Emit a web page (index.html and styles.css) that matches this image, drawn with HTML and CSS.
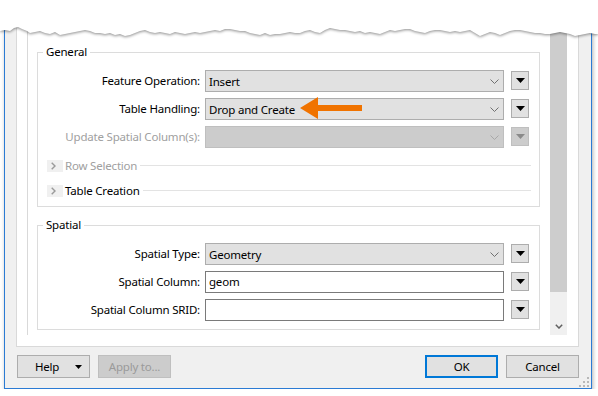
FILE: index.html
```html
<!DOCTYPE html>
<html lang="en">
<head>
  <meta charset="UTF-8" />
  <title>Writer Parameters</title>
  <link rel="stylesheet" href="styles.css">
</head>
<body>
  <div class="dialog">
    <div class="panel">
      <div class="viewport">
        <div class="content">

          <div class="group">
            <div class="group-title">General</div>
            <div class="rows">
              <span class="field-label">Feature Operation:</span>
              <div class="combo">
                <span>Insert</span>
                <svg class="chev" width="9" height="5" viewBox="0 0 9 5"><polyline points="0.5,0.5 4.5,4.5 8.5,0.5" /></svg>
              </div>
              <button class="drop"><svg width="9" height="5" viewBox="0 0 9 5"><polygon points="0,0 9,0 4.5,5" /></svg></button>

              <span class="field-label">Table Handling:</span>
              <div class="combo">
                <span>Drop and Create</span>
                <svg class="chev" width="9" height="5" viewBox="0 0 9 5"><polyline points="0.5,0.5 4.5,4.5 8.5,0.5" /></svg>
                <!-- callout arrow -->
                <svg class="callout" width="62" height="23" viewBox="0 0 62 23"><path d="M0,11 L18,0 L18,8 L62,8 L62,14 L18,14 L18,22 Z" /></svg>
              </div>
              <button class="drop"><svg width="9" height="5" viewBox="0 0 9 5"><polygon points="0,0 9,0 4.5,5" /></svg></button>

              <span class="field-label disabled">Update Spatial Column(s):</span>
              <div class="combo disabled">
                <span></span>
                <svg class="chev" width="9" height="5" viewBox="0 0 9 5"><polyline points="0.5,0.5 4.5,4.5 8.5,0.5" /></svg>
              </div>
              <button class="drop disabled"><svg width="9" height="5" viewBox="0 0 9 5"><polygon points="0,0 9,0 4.5,5" /></svg></button>
            </div>

            <div class="sections">
              <div class="expander disabled">
                <span class="exp-icon"><svg width="5" height="8" viewBox="0 0 5 8"><polyline points="0.7,0.7 4,4 0.7,7.3" /></svg></span>
                <span>Row Selection</span>
              </div>
              <div class="expander">
                <span class="exp-icon"><svg width="5" height="8" viewBox="0 0 5 8"><polyline points="0.7,0.7 4,4 0.7,7.3" /></svg></span>
                <span>Table Creation</span>
              </div>
            </div>
          </div>

          <div class="group spatial">
            <div class="group-title">Spatial</div>
            <div class="rows">
              <span class="field-label">Spatial Type:</span>
              <div class="combo">
                <span>Geometry</span>
                <svg class="chev" width="9" height="5" viewBox="0 0 9 5"><polyline points="0.5,0.5 4.5,4.5 8.5,0.5" /></svg>
              </div>
              <button class="drop"><svg width="9" height="5" viewBox="0 0 9 5"><polygon points="0,0 9,0 4.5,5" /></svg></button>

              <span class="field-label">Spatial Column:</span>
              <div class="text-input">geom</div>
              <button class="drop"><svg width="9" height="5" viewBox="0 0 9 5"><polygon points="0,0 9,0 4.5,5" /></svg></button>

              <span class="field-label">Spatial Column SRID:</span>
              <div class="text-input"></div>
              <button class="drop"><svg width="9" height="5" viewBox="0 0 9 5"><polygon points="0,0 9,0 4.5,5" /></svg></button>
            </div>
          </div>

        </div>
        <div class="scrollbar">
          <div class="thumb"></div>
          <div class="sb-arrow"><svg width="8" height="5" viewBox="0 0 8 5"><polyline points="0.8,0.8 4,4 7.2,0.8" /></svg></div>
        </div>
      </div>
    </div>

    <div class="actions">
      <button class="btn help"><span>Help</span><svg width="7" height="4" viewBox="0 0 7 4"><polygon points="0,0 7,0 3.5,4" /></svg></button>
      <button class="btn" disabled>Apply to...</button>
      <span class="spacer"></span>
      <button class="btn default">OK</button>
      <button class="btn">Cancel</button>
    </div>

    <svg class="grip" width="10" height="10" viewBox="0 0 10 10">
      <rect x="8" y="0" width="2" height="2" /><rect x="8" y="4" width="2" height="2" /><rect x="4" y="4" width="2" height="2" />
      <rect x="8" y="8" width="2" height="2" /><rect x="4" y="8" width="2" height="2" /><rect x="0" y="8" width="2" height="2" />
    </svg>
  </div>

  <!-- torn top edge of the screenshot -->
  <svg class="torn" width="598" height="44" viewBox="0 0 598 44">
    <path d="M0,0 L598,0 L598,34 L595,34 L590,33 L585,34 L580,35 L575,36 L570,34 L565,33 L560,32 L555,33 L550,34 L545,34 L540,33 L535,33 L530,32 L525,31 L520,30 L515,30 L510,31 L505,33 L500,35 L495,33 L490,32 L485,34 L480,36 L475,33 L470,30 L465,31 L460,32 L455,31 L450,32 L445,31 L440,30 L435,30 L430,31 L425,33 L420,32 L415,31 L410,29 L405,29 L400,30 L395,31 L390,30 L385,32 L380,34 L375,33 L370,32 L365,33 L360,31 L355,32 L350,31 L345,30 L340,30 L335,29 L330,28 L325,30 L320,33 L315,32 L310,30 L305,31 L300,33 L295,33 L290,32 L285,33 L280,34 L275,34 L270,35 L265,33 L260,35 L255,34 L250,33 L245,31 L240,31 L235,30 L230,29 L225,29 L220,31 L215,30 L210,31 L205,32 L200,33 L195,32 L190,33 L185,34 L180,33 L175,32 L170,34 L165,33 L160,32 L155,33 L150,32 L145,30 L140,31 L135,33 L130,35 L125,36 L120,34 L115,35 L110,33 L105,34 L100,33 L95,33 L90,31 L85,30 L80,31 L75,32 L70,33 L65,34 L60,35 L55,32 L50,34 L45,33 L40,31 L35,32 L30,33 L27,31 L22,29 L18,27 L14,28 L10,31 L5,30 L0,31 Z" />
  </svg>
</body>
</html>
```

FILE: styles.css
```css
* {
  box-sizing: border-box;
}
body {
  margin: 0;
  background: #fff;
  font-family: "Noto Sans", "Open Sans", sans-serif;
  font-size: 11.5px;
  letter-spacing: -0.2px;
  color: #000;
  overflow: hidden;
}
button {
  font: inherit;
  letter-spacing: inherit;
  color: inherit;
  margin: 0;
}
.dialog {
  position: relative;
  margin-left: 4px;
  width: 588px;
  height: 389px;
  background: #f0f0f0;
  border: 1px solid #2b7bd4;
  border-top: none;
  padding: 11px 12px 10px 11px;
  display: flex;
  flex-direction: column;
  gap: 8px;
  box-shadow: 1px 2px 4px rgb(0 0 0 / 0.3);
}
.panel {
  flex: 1;
  display: flex;
  background: #fff;
  border: 1px solid #d9d9d9;
  padding: 10px 11px 11px 10px;
}
.viewport {
  flex: 1;
  display: flex;
  border-left: 1px solid #d9d9d9;
}
.content {
  flex: 1;
  padding: 30px 10px 0 9px;
  overflow: hidden;
}
.scrollbar {
  width: 17px;
  background: #f0f0f0;
  display: flex;
  flex-direction: column;
}
.thumb {
  height: 270px;
  background: #cdcdcd;
}
.sb-arrow {
  margin-top: auto;
  height: 17px;
  display: flex;
  align-items: center;
  justify-content: center;
}
.sb-arrow svg {
  fill: none;
  stroke: #606060;
  stroke-width: 1.5;
}

/* group boxes */
.group {
  border: 1px solid #dcdcdc;
  padding-bottom: 3px;
}
.group.spatial {
  margin-top: 18px;
  padding-bottom: 8px;
}
.group-title {
  display: table;
  margin: -9px 0 0 5px;
  padding: 0 3px;
  line-height: 16px;
  background: #fff;
}
.rows {
  margin: 10px 10px 0 0;
  display: grid;
  grid-template-columns: 1fr 299px 18px;
  grid-auto-rows: 22px;
  column-gap: 7px;
  row-gap: 6px;
}
.field-label {
  text-align: right;
  white-space: nowrap;
  line-height: 22px;
  margin-right: -2px;
}
.field-label.disabled {
  color: #a0a0a0;
}
.combo {
  position: relative;
  display: flex;
  align-items: center;
  justify-content: space-between;
  border: 1px solid #adadad;
  background: #e1e1e1;
  padding: 0 4px 0 3px;
  white-space: nowrap;
}
.combo .chev {
  fill: none;
  stroke: #707070;
  stroke-width: 1;
}
.combo.disabled {
  background: #cccccc;
  border-color: #bfbfbf;
}
.combo.disabled .chev {
  stroke: #a8a8a8;
}
.callout {
  position: absolute;
  left: 94px;
  top: -2px;
  fill: #f07300;
}
.text-input {
  border: 1px solid #7a7a7a;
  background: #fff;
  padding: 0 3px;
  line-height: 20px;
}
.drop {
  align-self: start;
  margin-top: 1px;
  width: 18px;
  height: 19px;
  padding: 0;
  border: 1px solid #adadad;
  background: #e1e1e1;
  display: flex;
  align-items: center;
  justify-content: center;
}
.drop svg {
  fill: #000;
}
.drop.disabled {
  background: #cccccc;
  border-color: #bfbfbf;
}
.drop.disabled svg {
  fill: #8a8a8a;
}

/* collapsible sections */
.sections {
  margin-top: 5px;
}
.expander {
  display: flex;
  align-items: center;
  height: 25px;
  margin-left: 9px;
  padding-right: 8px;
  white-space: nowrap;
}
.expander::after {
  content: "";
  flex: 1;
  height: 1px;
  margin-left: 3px;
  background: #e3e3e3;
}
.expander.disabled {
  color: #a0a0a0;
}
.exp-icon {
  width: 16px;
  height: 12px;
  margin-right: 2px;
  background: #f0f0f0;
  display: flex;
  align-items: center;
  padding-left: 4px;
}
.exp-icon svg {
  fill: none;
  stroke: #9a9a9a;
  stroke-width: 1.4;
}

/* bottom buttons */
.actions {
  height: 23px;
  display: flex;
  gap: 8px;
  padding-left: 1px;
}
.spacer {
  flex: 1;
}
.btn {
  width: 73px;
  height: 23px;
  padding: 0;
  border: 1px solid #adadad;
  background: #e1e1e1;
}
.btn:disabled {
  background: #cccccc;
  border-color: #bfbfbf;
  color: #9a9a9a;
}
.btn.default {
  border: 2px solid #0078d7;
}
.btn.help {
  display: flex;
  align-items: center;
  justify-content: space-between;
  padding: 0 7px 0 17px;
}
.btn.help svg {
  fill: #000;
}
.grip {
  position: absolute;
  right: 2px;
  bottom: 1px;
  fill: #b8b8b8;
}
.torn {
  position: absolute;
  top: 0;
  left: 0;
  fill: #fff;
  filter: drop-shadow(0 1px 1.5px rgb(0 0 0 / 0.45));
}
```
